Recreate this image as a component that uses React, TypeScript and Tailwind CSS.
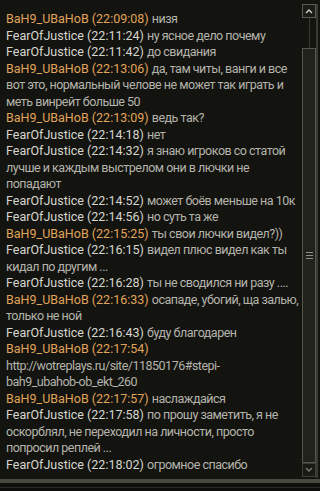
import React from "react";

type Line = { n?: string; t?: string; m: string; b?: boolean };

const lines: Line[] = [
  { n: "BaH9_UBaHoB", t: "22:09:08", m: "низя", b: true },
  { n: "FearOfJustice", t: "22:11:24", m: "ну ясное дело почему" },
  { n: "FearOfJustice", t: "22:11:42", m: "до свидания" },
  { n: "BaH9_UBaHoB", t: "22:13:06", m: "да, там читы, ванги и все", b: true },
  { m: "вот это, нормальный челове не может так играть и" },
  { m: "меть винрейт больше 50" },
  { n: "BaH9_UBaHoB", t: "22:13:09", m: "ведь так?", b: true },
  { n: "FearOfJustice", t: "22:14:18", m: "нет" },
  { n: "FearOfJustice", t: "22:14:32", m: "я знаю игроков со статой" },
  { m: "лучше и каждым выстрелом они в лючки не" },
  { m: "попадают" },
  { n: "FearOfJustice", t: "22:14:52", m: "может боёв меньше на 10к" },
  { n: "FearOfJustice", t: "22:14:56", m: "но суть та же" },
  { n: "BaH9_UBaHoB", t: "22:15:25", m: "ты свои лючки видел?))", b: true },
  { n: "FearOfJustice", t: "22:16:15", m: "видел плюс видел как ты" },
  { m: "кидал по другим ..." },
  { n: "FearOfJustice", t: "22:16:28", m: "ты не сводился ни разу ...." },
  { n: "BaH9_UBaHoB", t: "22:16:33", m: "осападе, убогий, ща залью,", b: true },
  { m: "только не ной" },
  { n: "FearOfJustice", t: "22:16:43", m: "буду благодарен" },
  { n: "BaH9_UBaHoB", t: "22:17:54", m: "", b: true },
  { m: "http://wotreplays.ru/site/11850176#stepi-" },
  { m: "bah9_ubahob-ob_ekt_260" },
  { n: "BaH9_UBaHoB", t: "22:17:57", m: "наслаждайся", b: true },
  { n: "FearOfJustice", t: "22:17:58", m: "по прошу заметить, я не" },
  { m: "оскорблял, не переходил на личности, просто" },
  { m: "попросил реплей ..." },
  { n: "FearOfJustice", t: "22:18:02", m: "огромное спасибо" },
];

export default function App() {
  return (
    <div
      className="w-[320px] h-[491px] bg-[#13130f] flex flex-col overflow-hidden"
      style={{ fontFamily: "Roboto, 'Noto Sans', sans-serif" }}
    >
      <div className="flex flex-1 min-h-0 pt-[4px] pr-[2px]">
        <div className="flex-1 min-w-0 pl-[6px] pt-[7px] text-[12.5px] leading-[16.5px] text-[#b4b4ac]">
          {lines.map((x, i) => (
            <div key={i} className="whitespace-nowrap">
              {x.n && (
                <span className={x.b ? "text-[#e0a45a]" : "text-[#d6d6ce]"}>
                  {x.n} ({x.t})
                </span>
              )}
              {x.n && x.m ? " " : ""}
              <span className="tracking-[-0.5px]">{x.m}</span>
            </div>
          ))}
        </div>
        <div className="w-[14px] mb-[1px] flex flex-col">
          <div className="h-[14px] border border-[#5c5c52] bg-[#1c1c17] flex items-center justify-center">
            <svg width="8" height="6" viewBox="0 0 8 6">
              <path d="M1 5 L4 2 L7 5" stroke="#c8c8be" strokeWidth="1.5" fill="none" />
            </svg>
          </div>
          <div className="h-[30px] flex justify-center">
            <div className="w-[1px] bg-[#3a3a32]" />
          </div>
          <div className="flex-1 border border-[#56564c] bg-[#22221c] flex items-center justify-center">
            <div className="flex flex-col gap-[2px]">
              <div className="w-[7px] h-[1px] bg-[#909088]" />
              <div className="w-[7px] h-[1px] bg-[#909088]" />
              <div className="w-[7px] h-[1px] bg-[#909088]" />
            </div>
          </div>
          <div className="h-[14px] border border-[#3e3e36] bg-[#1a1a15] flex items-center justify-center">
            <svg width="8" height="6" viewBox="0 0 8 6">
              <path d="M1 1 L4 4 L7 1" stroke="#7a7a70" strokeWidth="1.5" fill="none" />
            </svg>
          </div>
        </div>
        <div className="w-[2px] bg-[#3a3a32]" />
      </div>
      <div className="h-[4px] bg-[#48483f] mt-[1px]" />
      <div className="h-[4px] bg-[#0e0e0b]" />
      <div className="h-[1px] bg-[#2a2a24]" />
      <div className="h-[3px] bg-[#0e0e0b]" />
    </div>
  );
}
